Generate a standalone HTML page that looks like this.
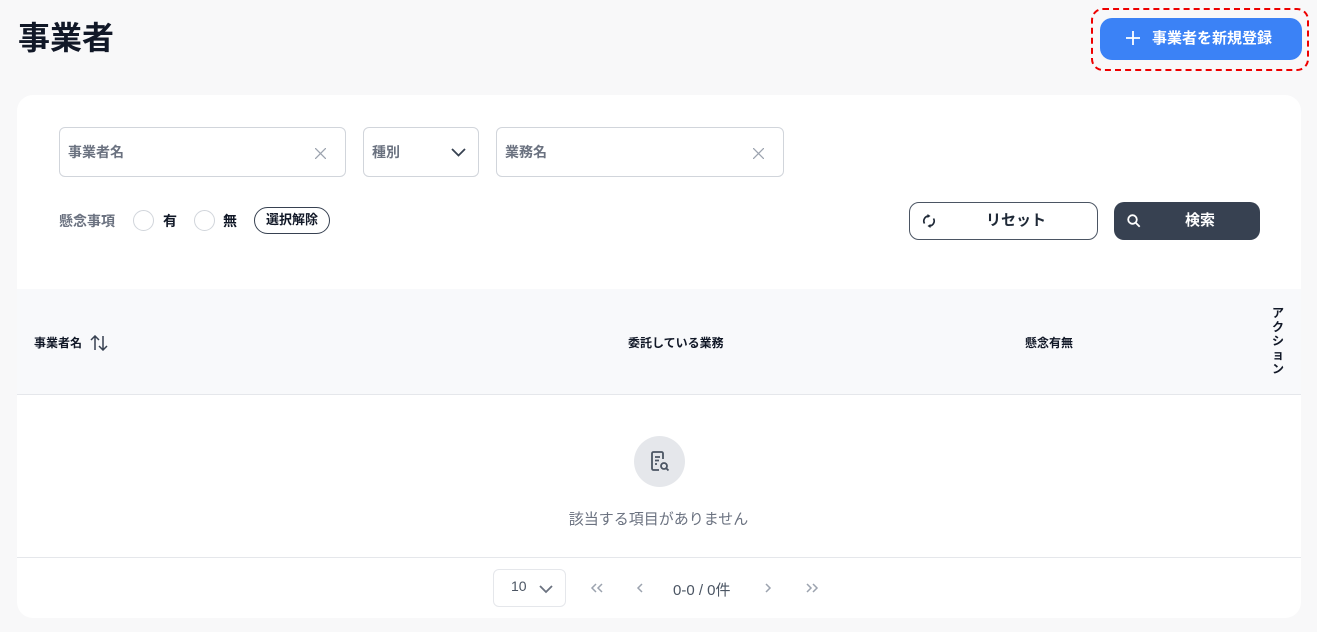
<!DOCTYPE html>
<html><head><meta charset="utf-8"><style>
*{box-sizing:border-box;margin:0;padding:0}
body{width:1317px;height:632px;background:#f8f8f9;font-family:"Liberation Sans","Noto Sans CJK JP",sans-serif;position:relative;overflow:hidden;color:#111827}
.a{position:absolute}
.inp{position:absolute;top:127px;height:50px;border:1px solid #d1d5db;border-radius:6px;background:#fff;font-size:14px;font-weight:bold;color:#6b7280;padding:14px 0 0 8px}
.radio{position:absolute;width:21px;height:21px;border:1.5px solid #d1d5db;border-radius:50%;top:210px}
.th{position:absolute;font-size:12px;font-weight:bold;color:#111827}
</style></head><body>
<div class="a" style="left:18px;top:18px;font-size:32px;font-weight:bold;line-height:40px">事業者</div>
<div class="a" style="left:1091px;top:8px;width:218px;height:63px;border:2.5px dashed #e00;border-radius:12px"></div>
<div class="a" style="left:1100px;top:18px;width:202px;height:42px;background:#3b82f6;border-radius:12px;color:#fff;font-size:15px;font-weight:bold;line-height:42px;padding-left:26px"><svg style="vertical-align:-2px;margin-right:12px" width="14" height="14" viewBox="0 0 14 14"><path d="M7 0v14M0 7h14" stroke="#fff" stroke-width="1.8"/></svg>事業者を新規登録</div>
<div class="a" style="left:17px;top:95px;width:1284px;height:523px;background:#fff;border-radius:16px"></div>
<div class="inp" style="left:59px;width:287px">事業者名<svg class="a" style="right:19px;top:20px" width="11" height="11" viewBox="0 0 11 11"><path d="M0 0l11 11M11 0L0 11" stroke="#9ca3af" stroke-width="1.3"/></svg></div>
<div class="inp" style="left:363px;width:116px">種別<svg class="a" style="right:12px;top:20px" width="15" height="9" viewBox="0 0 15 9"><path d="M1 1l6.5 6.5L14 1" fill="none" stroke="#374151" stroke-width="1.8"/></svg></div>
<div class="inp" style="left:496px;width:288px">業務名<svg class="a" style="right:19px;top:20px" width="11" height="11" viewBox="0 0 11 11"><path d="M0 0l11 11M11 0L0 11" stroke="#9ca3af" stroke-width="1.3"/></svg></div>
<div class="a" style="left:59px;top:211px;font-size:14px;font-weight:bold;color:#6b7280">懸念事項</div>
<div class="radio" style="left:133px"></div>
<div class="a" style="left:163px;top:211px;font-size:14px;font-weight:bold">有</div>
<div class="radio" style="left:194px"></div>
<div class="a" style="left:223px;top:211px;font-size:14px;font-weight:bold">無</div>
<div class="a" style="left:254px;top:207px;width:76px;height:27px;border:1.5px solid #374151;border-radius:14px;font-size:13px;font-weight:bold;text-align:center;line-height:24px">選択解除</div>
<div class="a" style="left:909px;top:202px;width:189px;height:38px;border:1.5px solid #4b5563;border-radius:10px;font-size:15px;font-weight:bold;line-height:35px;color:#1f2937">
<svg class="a" style="left:11px;top:10px" width="16" height="16" viewBox="0 0 16 16"><path d="M3.5 10.5A5 5 0 0 1 8 3M12.5 5.5A5 5 0 0 1 8 13" fill="none" stroke="#1f2937" stroke-width="1.7"/><path d="M6.5 1l3 2-3 2z M9.5 11l-3 2 3 2z" fill="#1f2937"/></svg>
<span class="a" style="left:76px">リセット</span></div>
<div class="a" style="left:1114px;top:202px;width:146px;height:38px;background:#374151;border-radius:10px;color:#fff;font-size:15px;font-weight:bold;line-height:38px">
<svg class="a" style="left:13px;top:12px" width="14" height="14" viewBox="0 0 14 14"><circle cx="5.5" cy="5.5" r="4.3" fill="none" stroke="#fff" stroke-width="1.8"/><path d="M8.7 8.7l4 4" stroke="#fff" stroke-width="1.8"/></svg>
<span class="a" style="left:71px">検索</span></div>
<div class="a" style="left:17px;top:289px;width:1284px;height:106px;background:#f8f9fb;border-bottom:1px solid #e5e7eb"></div>
<div class="th" style="left:34px;top:334px">事業者名<svg style="vertical-align:-4px;margin-left:8px" width="18" height="16" viewBox="0 0 18 16"><path d="M5 15V1M1 5l4-4 4 4M13 1v14M9 11l4 4 4-4" fill="none" stroke="#374151" stroke-width="1.5"/></svg></div>
<div class="th" style="left:628px;top:334px">委託している業務</div>
<div class="th" style="left:1025px;top:334px">懸念有無</div>
<div class="th" style="left:1272px;top:306px;width:14px;line-height:14px;font-size:12px">ア<br>ク<br>シ<br>ョ<br>ン</div>
<div class="a" style="left:634px;top:436px;width:51px;height:51px;border-radius:50%;background:#e5e7eb"></div>
<svg class="a" style="left:649px;top:450px" width="22" height="24" viewBox="0 0 22 24"><path d="M10 20H4.5a1.5 1.5 0 0 1-1.5-1.5V3.5A1.5 1.5 0 0 1 4.5 2h8A1.5 1.5 0 0 1 14 3.5V9" fill="none" stroke="#4b5563" stroke-width="1.8"/><path d="M6 7h5M6 10.5h4M6 14h2" stroke="#4b5563" stroke-width="1.8"/><circle cx="15" cy="16" r="3" fill="none" stroke="#4b5563" stroke-width="1.8"/><path d="M17.2 18.2l2.3 2.3" stroke="#4b5563" stroke-width="1.8"/></svg>
<div class="a" style="left:0;width:1317px;text-align:center;top:508px;font-size:15px;color:#6b7280">該当する項目がありません</div>
<div class="a" style="left:17px;top:557px;width:1284px;height:1px;background:#e5e7eb"></div>
<div class="a" style="left:493px;top:569px;width:73px;height:38px;border:1px solid #e5e7eb;border-radius:6px;font-size:14px;color:#4b5563;padding:8px 0 0 17px">10<svg class="a" style="left:45px;top:15px" width="14" height="9" viewBox="0 0 14 9"><path d="M1 1l6 6 6-6" fill="none" stroke="#6b7280" stroke-width="1.8"/></svg></div>
<svg class="a" style="left:590px;top:583px" width="14" height="10" viewBox="0 0 14 10"><path d="M6 1L2 5l4 4M12 1L8 5l4 4" fill="none" stroke="#9ca3af" stroke-width="1.5"/></svg>
<svg class="a" style="left:636px;top:583px" width="8" height="10" viewBox="0 0 8 10"><path d="M6 1L2 5l4 4" fill="none" stroke="#9ca3af" stroke-width="1.5"/></svg>
<div class="a" style="left:673px;top:579px;font-size:15px;color:#4b5563">0-0 / 0件</div>
<svg class="a" style="left:764px;top:583px" width="8" height="10" viewBox="0 0 8 10"><path d="M2 1l4 4-4 4" fill="none" stroke="#9ca3af" stroke-width="1.5"/></svg>
<svg class="a" style="left:805px;top:583px" width="14" height="10" viewBox="0 0 14 10"><path d="M2 1l4 4-4 4M8 1l4 4-4 4" fill="none" stroke="#9ca3af" stroke-width="1.5"/></svg>
</body></html>
